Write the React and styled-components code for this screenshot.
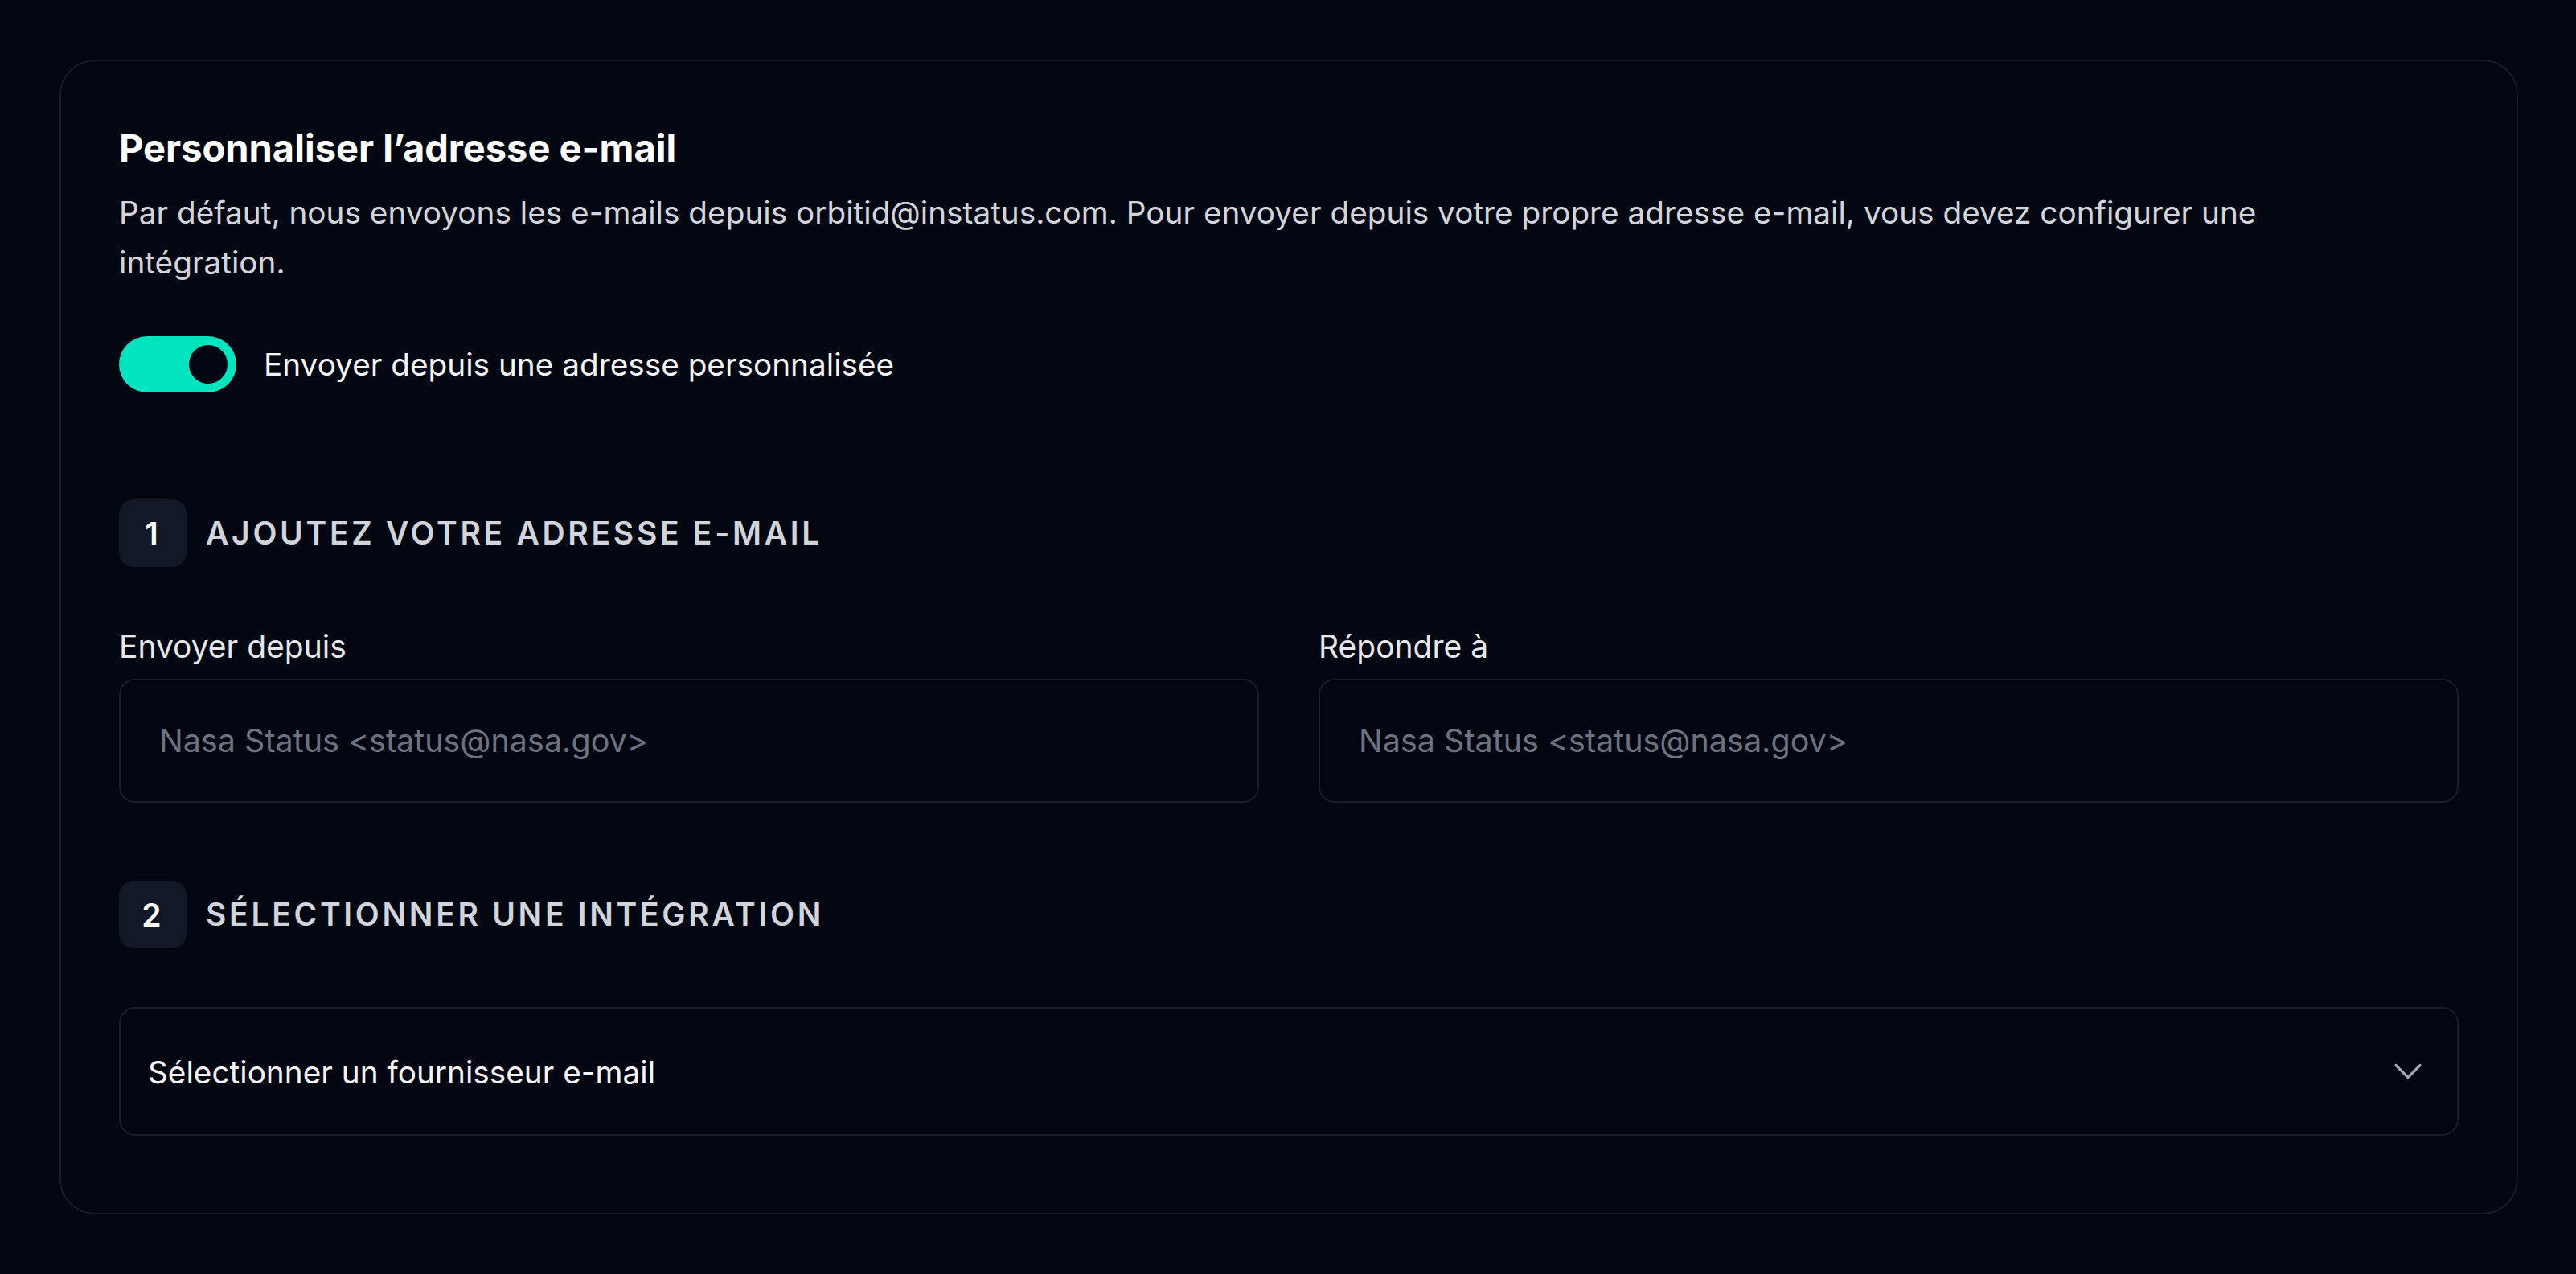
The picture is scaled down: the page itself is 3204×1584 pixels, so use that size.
import React, { useState } from "react";
import styled, { createGlobalStyle } from "styled-components";

const GlobalStyle = createGlobalStyle`
	html, body {
		margin: 0;
		background-color: #030712;
	}
	body {
		font-family: Inter, "Noto Sans", sans-serif;
		-webkit-font-smoothing: antialiased;
	}
	* {
		box-sizing: border-box;
	}
`;

function ChevronDown() {
	return (
		<svg
			width="48"
			height="48"
			viewBox="0 0 24 24"
			fill="none"
			stroke="currentColor"
			strokeWidth="1.6"
			strokeLinecap="round"
			strokeLinejoin="round"
		>
			<path d="m19.5 8.25-7.5 7.5-7.5-7.5" />
		</svg>
	);
}

function Step({ number, title, $top }) {
	return (
		<StepHeader $top={$top}>
			<StepBadge>{number}</StepBadge>
			<StepTitle>{title}</StepTitle>
		</StepHeader>
	);
}

function App() {
	const [custom, setCustom] = useState(true);

	return (
		<Page>
			<GlobalStyle />
			<Card>
				<Title>Personnaliser l’adresse e-mail</Title>
				<Description>
					Par défaut, nous envoyons les e-mails depuis orbitid@instatus.com.
					Pour envoyer depuis votre propre adresse e-mail, vous devez
					configurer une intégration.
				</Description>

				<ToggleRow>
					<Switch
						type="button"
						$on={custom}
						onClick={() => setCustom(!custom)}
					>
						<Knob />
					</Switch>
					<ToggleLabel>Envoyer depuis une adresse personnalisée</ToggleLabel>
				</ToggleRow>

				<Step number="1" title="Ajoutez votre adresse e-mail" $top={133} />

				<Fields>
					<Field>
						<Label htmlFor="from">Envoyer depuis</Label>
						<Input id="from" placeholder="Nasa Status <status@nasa.gov>" />
					</Field>
					<Field>
						<Label htmlFor="reply">Répondre à</Label>
						<Input id="reply" placeholder="Nasa Status <status@nasa.gov>" />
					</Field>
				</Fields>

				<Step number="2" title="Sélectionner une intégration" $top={97} />

				<Select type="button">
					<span>Sélectionner un fournisseur e-mail</span>
					<ChevronIcon>
						<ChevronDown />
					</ChevronIcon>
				</Select>
			</Card>
		</Page>
	);
}

export default App;

const Page = styled.div`
	min-height: 100vh;
	padding: 74px 72px 74px 74px;
	background-color: #030712;
`;

const Card = styled.section`
	display: flex;
	flex-direction: column;
	padding: 80px 72px 96px 72px;
	border: 2px solid #161d2b;
	border-radius: 44px;
`;

const Title = styled.h2`
	margin: 0;
	font-size: 47px;
	line-height: 56px;
	font-weight: 700;
	color: #ffffff;
`;

const Description = styled.p`
	margin: 21px 0 0 0;
	max-width: 2790px;
	font-size: 38.75px;
	line-height: 62px;
	color: #d1d5db;
`;

const ToggleRow = styled.div`
	display: flex;
	align-items: center;
	gap: 34px;
	margin-top: 61px;
`;

const Switch = styled.button`
	display: flex;
	align-items: center;
	justify-content: ${(p) => (p.$on ? "flex-end" : "flex-start")};
	width: 146px;
	height: 70px;
	padding: 0 11px;
	border: none;
	border-radius: 35px;
	background-color: ${(p) => (p.$on ? "#00e5c0" : "#1f2937")};
	cursor: pointer;
`;

const Knob = styled.span`
	width: 48px;
	height: 48px;
	border-radius: 50%;
	background-color: #030712;
`;

const ToggleLabel = styled.span`
	font-size: 38.75px;
	line-height: 46px;
	color: #f3f4f6;
`;

const StepHeader = styled.div`
	display: flex;
	align-items: center;
	gap: 24px;
	margin-top: ${(p) => p.$top}px;
`;

const StepBadge = styled.span`
	display: flex;
	align-items: center;
	justify-content: center;
	width: 84px;
	height: 84px;
	padding-right: 3px;
	border-radius: 18px;
	background-color: #111827;
	font-size: 39px;
	font-weight: 600;
	color: #ffffff;
`;

const StepTitle = styled.h3`
	margin: 0;
	font-size: 39px;
	line-height: 46px;
	font-weight: 600;
	letter-spacing: 0.095em;
	text-transform: uppercase;
	color: #d1d5db;
`;

const Fields = styled.div`
	display: grid;
	grid-template-columns: 1fr 1fr;
	column-gap: 74px;
	margin-top: 76px;
`;

const Field = styled.div`
	display: flex;
	flex-direction: column;
`;

const Label = styled.label`
	margin-bottom: 17px;
	font-size: 39px;
	line-height: 46px;
	color: #e5e7eb;
`;

const Input = styled.input`
	width: 100%;
	height: 154px;
	padding: 0 48px;
	border: 2px solid #161d2b;
	border-radius: 20px;
	background-color: #030611;
	font-family: Inter, "Noto Sans", sans-serif;
	font-size: 39.5px;
	color: #f3f4f6;
	outline: none;

	&::placeholder {
		color: #6b7280;
	}
`;

const Select = styled.button`
	display: flex;
	align-items: center;
	justify-content: space-between;
	width: 100%;
	height: 160px;
	margin-top: 73px;
	padding: 0 37px 0 34px;
	border: 2px solid #161d2b;
	border-radius: 20px;
	background-color: #030611;
	font-family: Inter, "Noto Sans", sans-serif;
	font-size: 38.75px;
	color: #f3f4f6;
	text-align: left;
	cursor: pointer;
`;

const ChevronIcon = styled.span`
	display: flex;
	color: #a3a6ad;
`;
